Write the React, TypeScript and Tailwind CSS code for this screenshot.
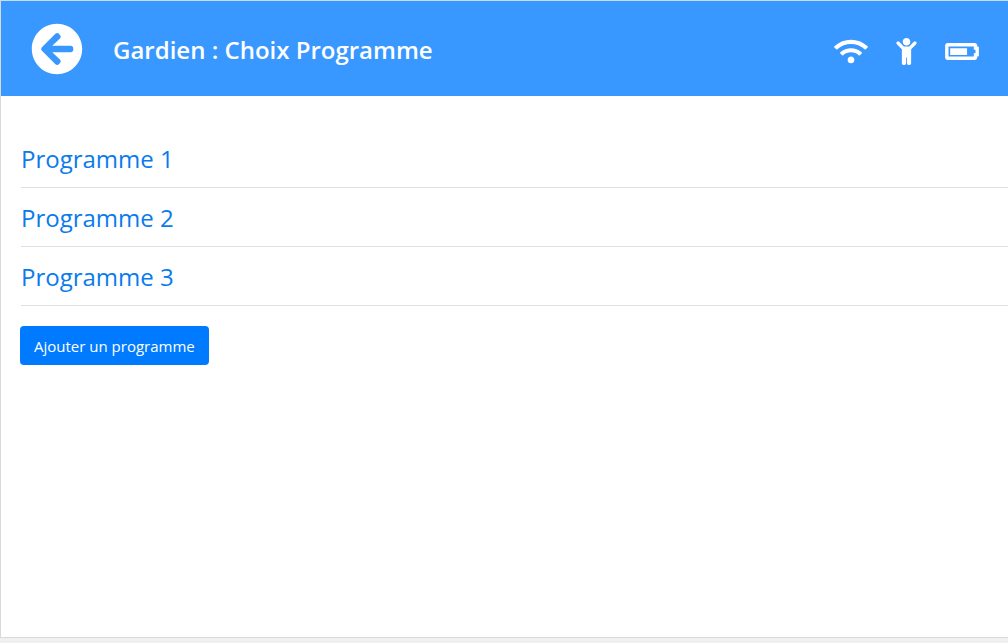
import { FaArrowCircleLeft, FaWifi, FaChild, FaBatteryThreeQuarters } from "react-icons/fa";

const programmes = ["Programme 1", "Programme 2", "Programme 3"];

export default function App() {
  return (
    <div className="flex min-h-screen flex-col bg-[#f0f0f0] pb-[5px] font-['Open_Sans','Noto_Sans',sans-serif]">
      <div className="flex-1 border-t border-b border-l border-[#d9d9d9] border-t-[#c5def5] bg-white">
        <header className="flex h-[95px] items-center bg-[#3898ff] pt-px pr-[29px] pl-[30px] text-white">
          <button type="button" aria-label="Retour">
            <FaArrowCircleLeft size={52} />
          </button>
          <h1 className="ml-[30px] flex-1 pt-0.5 text-2xl font-semibold">Gardien : Choix Programme</h1>
          <div className="flex items-center gap-7 pt-1">
            <FaWifi className="h-[27px] w-[34px]" />
            <FaChild className="h-[27px] w-[21px]" />
            <FaBatteryThreeQuarters className="h-[27px] w-[34px]" />
          </div>
        </header>
        <main className="pt-[33px] pl-[19px]">
          <ul className="ml-px">
            {programmes.map((name) => (
              <li key={name} className="flex h-[59px] items-center border-b border-[#dfdfdf] pt-0.5">
                <a href="#" className="text-2xl text-[#0a7bec]">{name}</a>
              </li>
            ))}
          </ul>
          <button type="button" className="mt-5 h-[39px] rounded bg-[#007bff] px-[14px] pt-px text-[15px] text-white">
            Ajouter un programme
          </button>
        </main>
      </div>
    </div>
  );
}
